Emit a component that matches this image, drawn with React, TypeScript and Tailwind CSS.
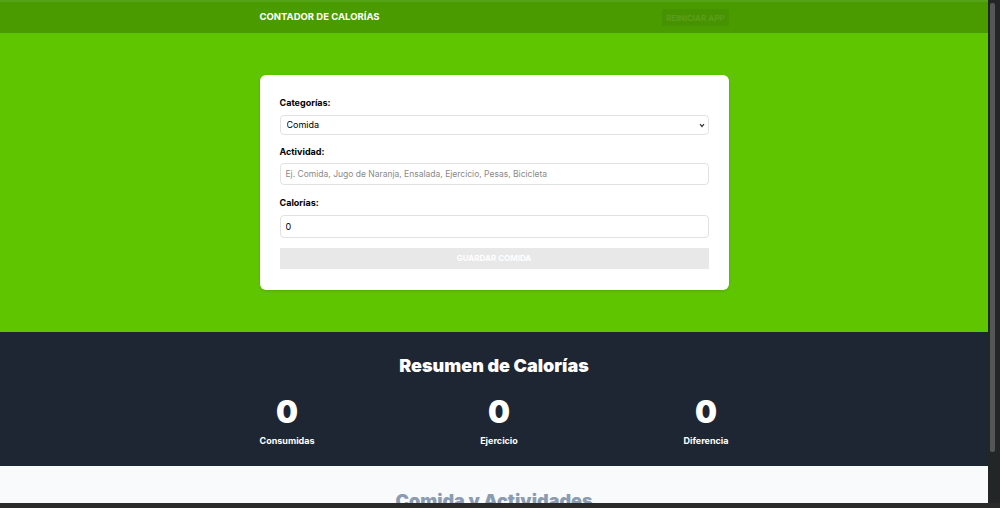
import React, { useState } from 'react';

const font = { fontFamily: 'Inter, "Noto Sans", sans-serif' };

function Stat({ value, label }: { value: number; label: string }) {
  return (
    <div className="flex flex-col items-center">
      <span className="text-[31px] font-black leading-none text-white">{value}</span>
      <span className="mt-[7px] text-[9px] font-bold text-white">{label}</span>
    </div>
  );
}

export default function App() {
  const [category, setCategory] = useState('1');
  const [name, setName] = useState('');
  const [calories, setCalories] = useState(0);

  const isValid = name.trim() !== '' && calories > 0;

  return (
    <div className="flex h-[508px] w-[1000px] flex-col overflow-hidden bg-[#262626]" style={font}>
      <div className="flex h-[503px] w-full shrink-0">
        <div className="flex min-w-0 flex-1 flex-col overflow-hidden">
          <div className="h-[2px] shrink-0 bg-[#55a318]" />
          <header className="shrink-0 bg-[#4a9b00]">
            <div className="mx-auto flex h-[31px] w-[469px] items-center justify-between">
              <h1 className="text-[9.5px] font-bold uppercase text-white">Contador de Calorías</h1>
              <button
                disabled
                className="h-[17px] rounded-[2px] bg-[#469200] px-[4px] text-[8px] font-bold uppercase text-white/10"
              >
                Reiniciar App
              </button>
            </div>
          </header>

          <section className="flex h-[299px] shrink-0 items-start justify-center bg-[#5ec500] pt-[42px]">
            <form className="w-[469px] rounded-[6px] bg-white px-[20px] pb-[21px] pt-[21px] shadow-sm">
              <div className="flex flex-col gap-[5px]">
                <label className="text-[9px] font-bold text-black">Categorías:</label>
                <div className="relative h-[20px]">
                  <select
                    value={category}
                    onChange={e => setCategory(e.target.value)}
                    className="block h-[20px] w-full appearance-none rounded-[4px] border border-[#e2e2e2] bg-white px-[6px] text-[9px] text-black outline-none"
                  >
                    <option value="1">Comida</option>
                    <option value="2">Ejercicio</option>
                  </select>
                  <svg
                    className="pointer-events-none absolute right-[4px] top-[8px]"
                    width="6"
                    height="5"
                    viewBox="0 0 6 5"
                    fill="none"
                  >
                    <path d="M1 1.2 3 3.5 5 1.2" stroke="#333" strokeWidth="1.2" />
                  </svg>
                </div>
              </div>

              <div className="mt-[10px] flex flex-col gap-[5px]">
                <label className="text-[9px] font-bold text-black">Actividad:</label>
                <input
                  type="text"
                  value={name}
                  onChange={e => setName(e.target.value)}
                  placeholder="Ej. Comida, Jugo de Naranja, Ensalada, Ejercicio, Pesas, Bicicleta"
                  className="block h-[22px] w-full rounded-[4px] border border-[#e2e2e2] px-[5px] text-[8.5px] text-black outline-none placeholder:text-[#8a8a8a]"
                />
              </div>

              <div className="mt-[11px] flex flex-col gap-[5px]">
                <label className="text-[9px] font-bold text-black">Calorías:</label>
                <input
                  type="number"
                  value={calories}
                  onChange={e => setCalories(+e.target.value)}
                  className="block h-[23px] w-full rounded-[4px] border border-[#e2e2e2] px-[5px] text-[9px] text-black outline-none"
                />
              </div>

              <button
                type="submit"
                disabled={!isValid}
                className="mt-[10px] block h-[21px] w-full bg-[#e8e8e8] text-[8px] font-bold uppercase text-white"
              >
                Guardar Comida
              </button>
            </form>
          </section>

          <section className="h-[134px] shrink-0 bg-[#1e2533] pt-[20px]">
            <h2 className="text-center text-[18px] font-black text-white">Resumen de Calorías</h2>
            <div className="mx-auto mt-[17px] flex w-[469px] justify-between">
              <Stat value={0} label="Consumidas" />
              <Stat value={0} label="Ejercicio" />
              <Stat value={0} label="Diferencia" />
            </div>
          </section>

          <section className="flex-1 bg-[#f8fafc] pt-[21px]">
            <h2 className="text-center text-[18px] font-black text-[#8b9bb1]">Comida y Actividades</h2>
          </section>
        </div>

        <div className="w-[12px] shrink-0 bg-[#232626] pl-[2px] pt-[3px]">
          <div className="h-[449px] w-[5px] rounded-[2px] bg-[#555757]" />
        </div>
      </div>
      <div className="h-[5px] shrink-0 bg-[#2a2a2a]" />
    </div>
  );
}
